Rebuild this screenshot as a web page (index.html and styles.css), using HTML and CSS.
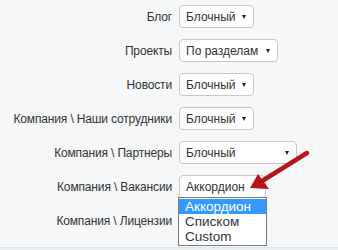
FILE: index.html
```html
<!DOCTYPE html>
<html lang="ru">
<head>
  <meta charset="UTF-8">
  <title>Настройки разделов</title>
  <link rel="stylesheet" href="styles.css">
</head>
<body>

<div class="settings">
  <div class="row">
    <span class="label">Блог</span>
    <div class="select w75"><span>Блочный</span><i class="caret"></i></div>
  </div>
  <div class="row">
    <span class="label">Проекты</span>
    <div class="select w99"><span>По разделам</span><i class="caret"></i></div>
  </div>
  <div class="row">
    <span class="label">Новости</span>
    <div class="select w75"><span>Блочный</span><i class="caret"></i></div>
  </div>
  <div class="row">
    <span class="label">Компания \ Наши сотрудники</span>
    <div class="select w75"><span>Блочный</span><i class="caret"></i></div>
  </div>
  <div class="row">
    <span class="label">Компания \ Партнеры</span>
    <div class="select w118"><span>Блочный</span><i class="caret"></i></div>
  </div>
  <div class="row">
    <span class="label">Компания \ Вакансии</span>
    <div class="select w87 open">
      <span>Аккордион</span>
      <ul class="options">
        <li class="active">Аккордион</li>
        <li>Списком</li>
        <li>Custom</li>
      </ul>
    </div>
  </div>
  <div class="row">
    <span class="label">Компания \ Лицензии</span>
  </div>

  <!-- pointer to the opened list -->
  <svg class="pointer" width="70" height="50" viewBox="0 0 70 50">
    <line x1="65" y1="5" x2="20" y2="33" stroke="#b8141b" stroke-width="4.5" stroke-linecap="round"/>
    <polygon points="8,40 16,26 27,41" fill="#b8141b"/>
  </svg>
</div>

<div class="footer"></div>

</body>
</html>
```

FILE: styles.css
```css
body {
  margin: 0;
  background-color: #f5f7f8;
  font-family: "Liberation Sans", Arial, sans-serif;
  font-size: 12px;
  color: #333;
}

.settings {
  position: relative;
  height: 247px;
  padding-top: 5px;
  box-sizing: border-box;
  display: flex;
  flex-direction: column;
  gap: 11px;
}

.row {
  display: flex;
  align-items: center;
  gap: 7px;
  height: 23px;
}

.label {
  width: 172px;
  text-align: right;
  white-space: nowrap;
  letter-spacing: -0.15px;
}

.select {
  position: relative;
  height: 23px;
  box-sizing: border-box;
  border: 1px solid #c6c8ca;
  border-radius: 4px;
  background-color: #fff;
  display: flex;
  align-items: center;
  justify-content: space-between;
  padding: 0 7px 0 6px;
  font-size: 12px;
}

.w75 { width: 75px; }
.w87 { width: 87px; }
.w99 { width: 99px; }
.w118 { width: 118px; }

.caret {
  width: 0;
  height: 0;
  border-left: 2.5px solid transparent;
  border-right: 2.5px solid transparent;
  border-top: 4px solid #222;
}

.options {
  position: absolute;
  top: 21px;
  left: -2px;
  width: 89px;
  box-sizing: border-box;
  margin: 0;
  padding: 1px 0;
  list-style: none;
  background-color: #fff;
  border: 1px solid #7a7a7a;
  font-size: 13.5px;
}

.options li {
  height: 15px;
  line-height: 15px;
  padding-left: 6px;
}

.options li.active {
  background-color: #3399ff;
  color: #fff;
}

.pointer {
  position: absolute;
  left: 242px;
  top: 148px;
}

.footer {
  height: 3px;
  background-color: #e8edf0;
  border-top: 1px solid #dfe5e9;
}
```
